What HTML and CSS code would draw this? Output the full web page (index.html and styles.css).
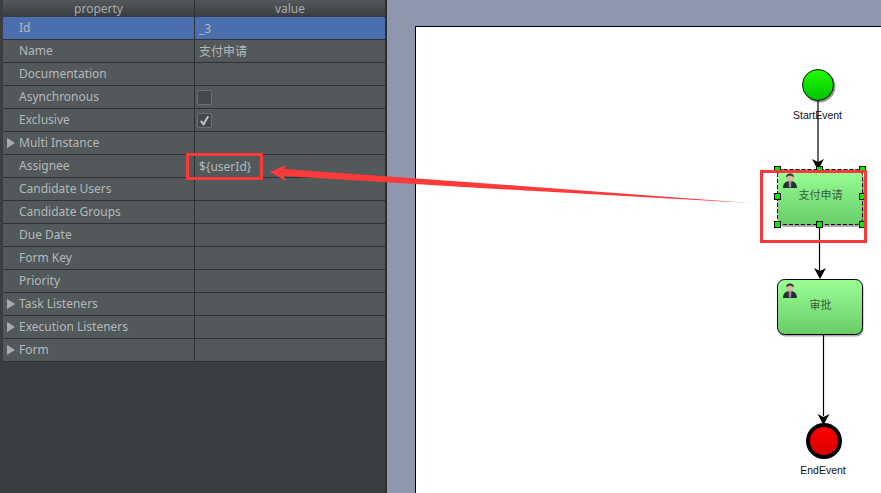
FILE: index.html
```html
<!DOCTYPE html>
<html lang="en">
<head>
  <meta charset="UTF-8" />
  <title>Process Designer</title>
  <link rel="stylesheet" href="styles.css">
</head>
<body>
  <div class="panel">
    <div class="table">
      <div class="head">
        <div class="head-cell name-col">property</div>
        <div class="head-cell">value</div>
      </div>
      <div class="row selected">
        <div class="cell name-col">Id</div>
        <div class="cell">_3</div>
      </div>
      <div class="row">
        <div class="cell name-col">Name</div>
        <div class="cell">支付申请</div>
      </div>
      <div class="row">
        <div class="cell name-col">Documentation</div>
        <div class="cell"></div>
      </div>
      <div class="row">
        <div class="cell name-col">Asynchronous</div>
        <div class="cell"><span class="check"></span></div>
      </div>
      <div class="row">
        <div class="cell name-col">Exclusive</div>
        <div class="cell">
          <span class="check">
            <svg width="13" height="13" viewBox="0 0 14 14"><path d="M3 7.5 L6 11 L11 2.5" fill="none" stroke="#c0c0c0" stroke-width="2.2"/></svg>
          </span>
        </div>
      </div>
      <div class="row">
        <div class="cell name-col expand">Multi Instance</div>
        <div class="cell"></div>
      </div>
      <div class="row">
        <div class="cell name-col">Assignee</div>
        <div class="cell">${userId}</div>
      </div>
      <div class="row">
        <div class="cell name-col">Candidate Users</div>
        <div class="cell"></div>
      </div>
      <div class="row">
        <div class="cell name-col">Candidate Groups</div>
        <div class="cell"></div>
      </div>
      <div class="row">
        <div class="cell name-col">Due Date</div>
        <div class="cell"></div>
      </div>
      <div class="row">
        <div class="cell name-col">Form Key</div>
        <div class="cell"></div>
      </div>
      <div class="row">
        <div class="cell name-col">Priority</div>
        <div class="cell"></div>
      </div>
      <div class="row">
        <div class="cell name-col expand">Task Listeners</div>
        <div class="cell"></div>
      </div>
      <div class="row">
        <div class="cell name-col expand">Execution Listeners</div>
        <div class="cell"></div>
      </div>
      <div class="row">
        <div class="cell name-col expand">Form</div>
        <div class="cell"></div>
      </div>
    </div>
  </div>

  <div class="workspace">
    <div class="canvas">
      <svg class="diagram" width="465" height="466" viewBox="416 27 465 466">
        <defs>
          <linearGradient id="taskFill" x1="0" y1="0" x2="0" y2="1">
            <stop offset="0" stop-color="#9bff96"/>
            <stop offset="1" stop-color="#68cc68"/>
          </linearGradient>
          <linearGradient id="startFill" x1="0" y1="0" x2="0" y2="1">
            <stop offset="0" stop-color="#22ff00"/>
            <stop offset="1" stop-color="#00c000"/>
          </linearGradient>
          <linearGradient id="endFill" x1="0" y1="0" x2="0" y2="1">
            <stop offset="0" stop-color="#ff0000"/>
            <stop offset="1" stop-color="#d80000"/>
          </linearGradient>
          <g id="person">
            <path d="M-7 8 C-7 3 -4 2 -2 1 L2 1 C4 2 7 3 7 8 Z" fill="#2a2e32"/>
            <path d="M-1.5 1 L1.5 1 L1 7.5 L-1 7.5 Z" fill="#8a929a"/>
            <ellipse cx="0" cy="-2.5" rx="3.4" ry="4" fill="#d8b9a0"/>
            <path d="M-3.8 -2.5 C-4.5 -8 4.5 -8 3.8 -2.5 C2 -4.8 -2 -4.8 -3.8 -2.5 Z" fill="#3a3633"/>
          </g>
        </defs>

        <!-- start event -->
        <circle cx="819.5" cy="86.5" r="16" fill="#999"/>
        <circle cx="818" cy="85" r="15.5" fill="url(#startFill)" stroke="#111" stroke-width="1"/>
        <text class="event-label" x="817.5" y="119" text-anchor="middle">StartEvent</text>
        <path d="M818 101 V163" stroke="#000" stroke-width="1.2"/>
        <path d="M812 159 L818 162 L824 159 L818 170 Z" fill="#000"/>

        <!-- first task, selected -->
        <rect x="778" y="172" width="86" height="55" rx="7" fill="#aaa"/>
        <rect x="777.5" y="169.5" width="85" height="55" rx="6" fill="url(#taskFill)" stroke="#000" stroke-dasharray="4 2"/>
        <use href="#person" x="790" y="180"/>
        <text class="task-label" x="820.5" y="199" text-anchor="middle">支付申请</text>
        <g fill="#00ee00" stroke="#000">
          <rect x="774.5" y="166.5" width="6" height="6"/>
          <rect x="816.5" y="166.5" width="6" height="6"/>
          <rect x="859.5" y="166.5" width="6" height="6"/>
          <rect x="774.5" y="193.5" width="6" height="6"/>
          <rect x="859.5" y="193.5" width="6" height="6"/>
          <rect x="774.5" y="221.5" width="6" height="6"/>
          <rect x="816.5" y="221.5" width="6" height="6"/>
          <rect x="859.5" y="221.5" width="6" height="6"/>
        </g>

        <path d="M819.5 228 V272" stroke="#000" stroke-width="1.2"/>
        <path d="M814 268 L820 271 L826 268 L820 279 Z" fill="#000"/>

        <!-- second task -->
        <rect x="778.5" y="281.5" width="85" height="55" rx="7" fill="#aaa"/>
        <rect x="777.5" y="279.5" width="85" height="55" rx="7" fill="url(#taskFill)" stroke="#000"/>
        <use href="#person" x="790" y="290"/>
        <text class="task-label" x="820.5" y="309" text-anchor="middle">审批</text>

        <path d="M823.5 335 V416" stroke="#000" stroke-width="1.2"/>
        <path d="M817.5 414 L823.5 417 L829.5 414 L823.5 425 Z" fill="#000"/>

        <!-- end event -->
        <circle cx="824" cy="441" r="16" fill="url(#endFill)" stroke="#000" stroke-width="4"/>
        <text class="event-label" x="823" y="474" text-anchor="middle">EndEvent</text>
      </svg>
    </div>
  </div>

  <!-- red annotations drawn on top of the screenshot -->
  <svg class="marks" width="881" height="493" viewBox="0 0 881 493">
    <rect x="187.5" y="154.5" width="74" height="24" fill="none" stroke="#f83a3a" stroke-width="3"/>
    <rect x="761.5" y="171.5" width="104" height="70" fill="none" stroke="#f83a3a" stroke-width="3"/>
    <path d="M270 172 L286 165 L284 169 L480 183 L750 203 L480 188 L284 176 L286 181 Z" fill="#fb3a3a"/>
  </svg>
</body>
</html>
```

FILE: styles.css
```css
html, body {
  margin: 0;
  height: 100%;
  overflow: hidden;
}

body {
  display: flex;
  font-family: "Noto Sans", "Noto Sans CJK SC", sans-serif;
  font-size: 12px;
  color: #b4b8ba;
  background: #8e97ae;
}

.panel {
  width: 382px;
  height: 493px;
  padding-left: 3px;
  background: #3b3e40;
  border-right: 2px solid #2b2d2e;
}

.head {
  display: flex;
  height: 17px;
  background: linear-gradient(to bottom, #55585a, #3a3d3f);
}

.head-cell {
  flex: 1;
  line-height: 17px;
  text-align: center;
  color: #a8acae;
}

.name-col {
  flex: none;
  width: 191px;
  border-right: 1px solid #2f3233;
}

.row {
  display: flex;
  height: 22px;
  background: #53585a;
  border-bottom: 1px solid #2f3233;
}

.row.selected {
  background: #4b6eaf;
}

.cell {
  flex: 1;
  display: flex;
  align-items: center;
  padding-left: 4px;
}

.cell.name-col {
  flex: none;
  width: 175px;
  height: 20px;
  padding-bottom: 2px;
  padding-left: 16px;
  position: relative;
}

.expand::before {
  content: "";
  position: absolute;
  left: 4px;
  top: 6px;
  border-left: 8px solid #a8acae;
  border-top: 5px solid transparent;
  border-bottom: 5px solid transparent;
}

.check {
  display: flex;
  width: 13px;
  height: 13px;
  margin-left: -2px;
  background: #45494b;
  border: 1px solid #6b6f71;
  border-radius: 2px;
}

.workspace {
  flex: 1;
  padding: 26px 0 0 28px;
}

.canvas {
  height: 466px;
  background: #fff;
  border-top: 1px solid #000;
  border-left: 1px solid #000;
}

.diagram {
  display: block;
}

.event-label {
  font-family: "Liberation Sans", sans-serif;
  font-size: 10.5px;
  fill: #111;
}

.task-label {
  font-family: "Noto Sans CJK SC", sans-serif;
  font-size: 11px;
  fill: #3a5a40;
}

.marks {
  position: absolute;
  left: 0;
  top: 0;
}
```
